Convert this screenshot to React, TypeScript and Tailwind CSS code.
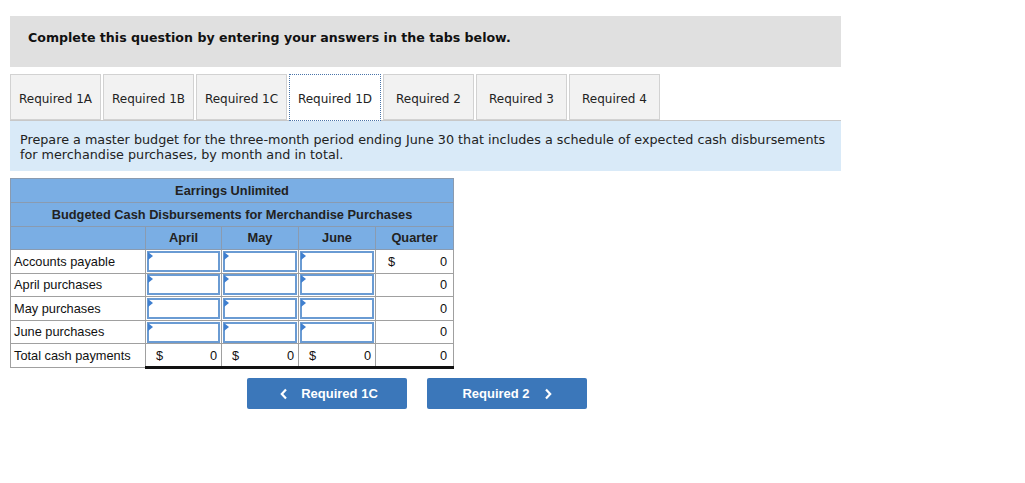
import React from 'react';

const tabs = ['Required 1A', 'Required 1B', 'Required 1C', 'Required 1D', 'Required 2', 'Required 3', 'Required 4'];
const rows = ['Accounts payable', 'April purchases', 'May purchases', 'June purchases'];

const InputCell: React.FC = () => (
  <td className="border border-[#a0a0a0] p-0">
    <div className="relative mx-[1px] h-[21px] border-2 border-[#6a9bd3] bg-white">
      <span className="absolute -left-[1px] -top-[1px] h-0 w-0 border-y-[4px] border-l-[5px] border-y-transparent border-l-[#3f7fcf]" />
    </div>
  </td>
);

const App: React.FC = () => {
  return (
    <div className="w-[1025px] h-[483px] bg-white pt-4 pl-[10px]" style={{ fontFamily: '"DejaVu Sans", Verdana, sans-serif' }}>
      <div className="w-[831px] h-[51px] bg-[#e0e0e0] pl-[18px] pt-[9px]">
        <span className="text-[12.6px] font-bold text-[#111]">Complete this question by entering your answers in the tabs below.</span>
      </div>

      <div className="mt-[7px] w-[831px] flex gap-[2px] h-[47px] border-b border-[#c8c8c8]">
        {tabs.map((t, i) => (
          <div
            key={t}
            className={
              i === 3
                ? 'w-[92px] h-[47px] flex items-center justify-center pt-[3px] text-[12px] text-[#222] bg-white border border-dotted border-[#4a74a8]'
                : 'w-[91px] h-[46px] flex items-center justify-center pt-[3px] text-[12px] text-[#222] bg-[#f2f2f2] border border-[#d2d2d2]'
            }
          >
            {t}
          </div>
        ))}
      </div>

      <div className="w-[831px] h-[50px] bg-[#d9eaf8] pl-[10px] pt-[11px] text-[12.75px] leading-[15px] text-[#222]">
        Prepare a master budget for the three-month period ending June 30 that includes a schedule of expected cash disbursements
        <br />
        for merchandise purchases, by month and in total.
      </div>

      <table
        className="mt-[7px] border-collapse border border-[#a0a0a0] text-[12.8px] text-[#111] table-fixed w-[443px]"
        style={{ fontFamily: '"Liberation Sans", Arial, sans-serif' }}
      >
        <colgroup>
          <col className="w-[135px]" />
          <col className="w-[76px]" />
          <col className="w-[77px]" />
          <col className="w-[77px]" />
          <col className="w-[78px]" />
        </colgroup>
        <thead>
          <tr className="h-[24px] bg-[#7aaee4]">
            <th colSpan={5} className="border border-[#8a9bb0] font-bold text-[#222] p-0">Earrings Unlimited</th>
          </tr>
          <tr className="h-[24px] bg-[#7aaee4]">
            <th colSpan={5} className="border border-[#8a9bb0] font-bold text-[#222] p-0">Budgeted Cash Disbursements for Merchandise Purchases</th>
          </tr>
          <tr className="h-[23px] bg-[#7aaee4] font-bold text-[#222]">
            <th className="border border-[#8a9bb0] p-0"></th>
            <th className="border border-[#8a9bb0] p-0">April</th>
            <th className="border border-[#8a9bb0] p-0">May</th>
            <th className="border border-[#8a9bb0] p-0">June</th>
            <th className="border border-[#8a9bb0] p-0">Quarter</th>
          </tr>
        </thead>
        <tbody>
          {rows.map((r, i) => (
            <tr key={r} className="h-[23.6px]">
              <td className="border border-[#a0a0a0] px-[3px] py-0 whitespace-nowrap">{r}</td>
              <InputCell />
              <InputCell />
              <InputCell />
              <td className="border border-[#a0a0a0] px-[6px] py-0">
                <div className="flex justify-between">
                  <span className="pl-[6px]">{i === 0 ? '$' : ''}</span>
                  <span>0</span>
                </div>
              </td>
            </tr>
          ))}
          <tr className="h-[24px]">
            <td className="border border-[#a0a0a0] border-t-[#222] px-[3px] py-0 whitespace-nowrap">Total cash payments</td>
            {[0, 1, 2].map((k) => (
              <td key={k} className="border border-[#a0a0a0] border-t-[#222] border-b-[3px] border-b-[#111] px-[4px] py-0">
                <div className="flex justify-between">
                  <span className="pl-[6px]">$</span>
                  <span>0</span>
                </div>
              </td>
            ))}
            <td className="border border-[#a0a0a0] border-t-[#222] border-b-[3px] border-b-[#111] px-[6px] py-0">
              <div className="flex justify-end">
                <span>0</span>
              </div>
            </td>
          </tr>
        </tbody>
      </table>

      <div className="mt-[9px] flex gap-5 pl-[237px]" style={{ fontFamily: '"Liberation Sans", Arial, sans-serif' }}>
        <button className="w-[160px] h-[31px] rounded-[2px] bg-[#3b77ba] text-white text-[13px] font-bold flex items-center justify-center gap-[13px] pl-1">
          <svg width="8" height="12" viewBox="0 0 8 12" fill="none" stroke="white" strokeWidth="2.2">
            <path d="M6 1.5 1.8 6 6 10.5" />
          </svg>
          Required 1C
        </button>
        <button className="w-[160px] h-[31px] rounded-[2px] bg-[#3b77ba] text-white text-[13px] font-bold flex items-center justify-center gap-[14px]">
          Required 2
          <svg width="8" height="12" viewBox="0 0 8 12" fill="none" stroke="white" strokeWidth="2.2">
            <path d="M2 1.5 6.2 6 2 10.5" />
          </svg>
        </button>
      </div>
    </div>
  );
};

export default App;
